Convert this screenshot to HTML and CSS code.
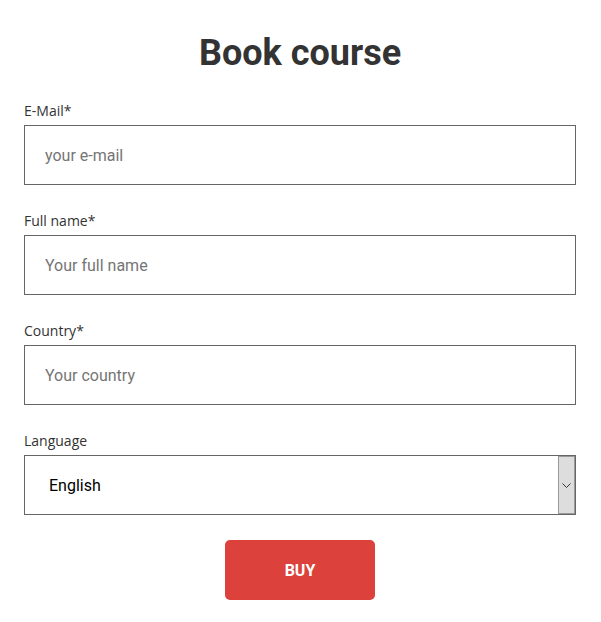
FILE: index.html
```html
<!DOCTYPE html>
<html lang="en">
  <head>
    <meta charset="UTF-8" />
    <meta name="viewport" content="width=device-width, initial-scale=1.0" />
    <title>Book course</title>
    <link rel="stylesheet" href="styles.css">
  </head>
  <body>
    <form class="booking">
      <h1 class="booking-title">Book course</h1>

      <div class="field">
        <label for="email">E-Mail*</label>
        <input type="email" id="email" placeholder="your e-mail" />
      </div>

      <div class="field">
        <label for="fullname">Full name*</label>
        <input type="text" id="fullname" placeholder="Your full name" />
      </div>

      <div class="field">
        <label for="country">Country*</label>
        <input type="text" id="country" placeholder="Your country" />
      </div>

      <div class="field">
        <label for="language">Language</label>
        <div class="select-wrap">
          <select id="language">
            <option>English</option>
            <option>Deutsch</option>
            <option>Español</option>
          </select>
        </div>
      </div>

      <div class="actions">
        <button type="button" class="buy">BUY</button>
      </div>
    </form>
  </body>
</html>
```

FILE: styles.css
```css
body {
  margin: 0;
  background: #fff;
  font-family: 'Open Sans', sans-serif;
  color: #333;
}

.booking {
  width: 552px;
  margin-left: 24px;
}

.booking-title {
  margin: 0 0 32px;
  padding-top: 32px;
  height: 68px;
  box-sizing: border-box;
  font-family: Roboto, sans-serif;
  font-size: 36px;
  font-weight: 700;
  line-height: 42px;
  text-align: center;
  color: #333;
}

.field {
  margin-bottom: 25px;
}

.field label {
  display: block;
  font-size: 14px;
  line-height: 20px;
  padding-top: 1px;
  margin-bottom: 4px;
  color: #333;
}

.field input,
.field select {
  display: block;
  width: 100%;
  height: 60px;
  box-sizing: border-box;
  border: 1px solid #666;
  border-radius: 0;
  padding: 0 20px;
  font-family: Roboto, sans-serif;
  font-size: 16px;
  color: #000;
  background: #fff;
  outline: none;
}

.field input::placeholder {
  color: #757575;
}

.select-wrap {
  position: relative;
}

.field select {
  appearance: none;
  -webkit-appearance: none;
  padding-left: 24px;
}

.select-wrap::after {
  content: '';
  position: absolute;
  top: 1px;
  right: 1px;
  bottom: 1px;
  width: 15px;
  border: 1px solid #999;
  background: #ddd url("data:image/svg+xml,%3Csvg xmlns='http://www.w3.org/2000/svg' width='9' height='5' viewBox='0 0 9 5'%3E%3Cpath d='M.5.5l4 4 4-4' fill='none' stroke='%23333' stroke-width='1'/%3E%3C/svg%3E") no-repeat center;
  pointer-events: none;
}

.actions {
  display: flex;
  justify-content: center;
}

.buy {
  width: 150px;
  height: 60px;
  border: none;
  border-radius: 5px;
  background: #dc413b;
  color: #fff;
  font-family: Roboto, sans-serif;
  font-size: 16px;
  font-weight: 700;
  cursor: pointer;
}
```
